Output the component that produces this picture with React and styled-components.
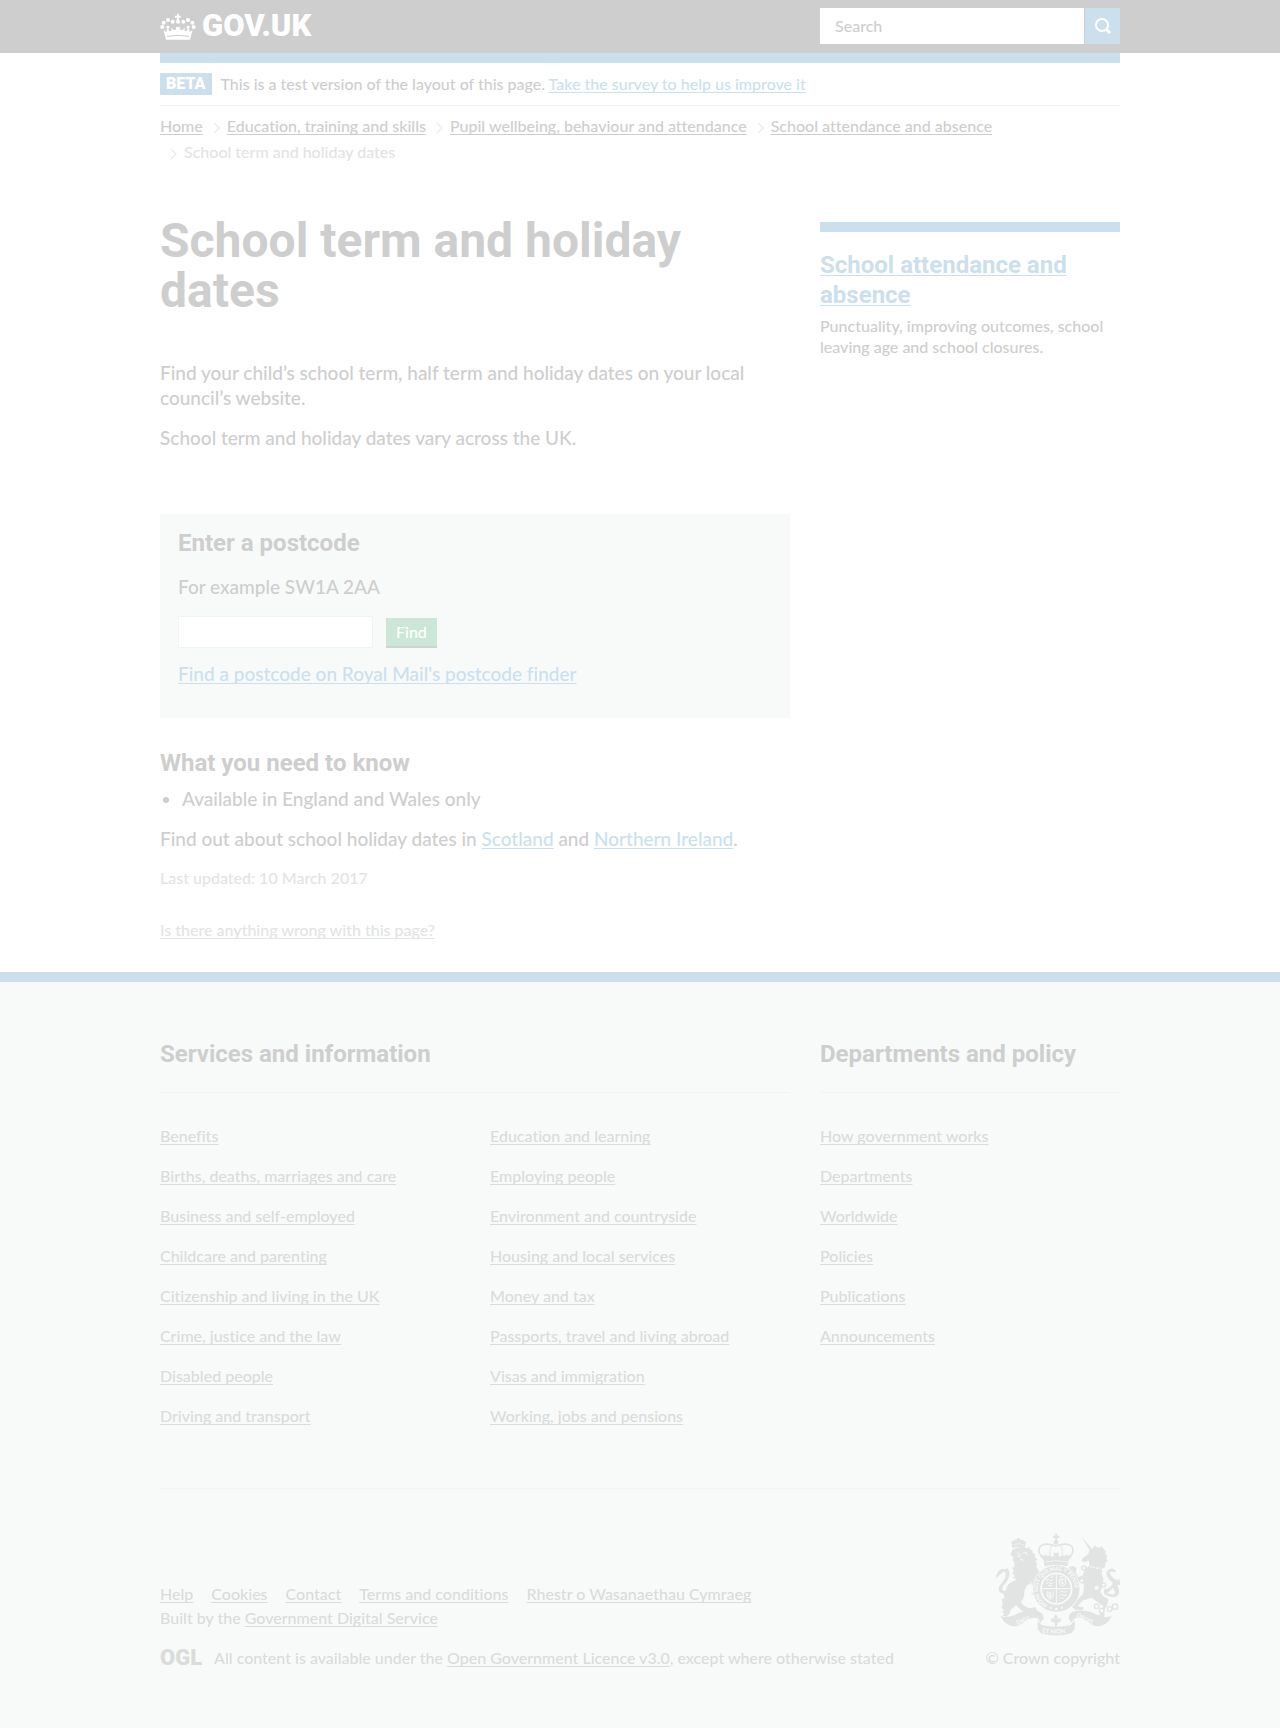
import React from "react";
import styled, { createGlobalStyle } from "styled-components";

const c = {
  ink: "#cecece",
  muted: "#dadbdb",
  faint: "#e2e4e5",
  blue: "#ccdfed",
  green: "#cce7d8",
  panel: "#f8faf9",
  rule: "#f2f3f3",
};

const display = `Roboto, "Liberation Sans", sans-serif`;

const Global = createGlobalStyle`
  *, *::before, *::after { box-sizing: border-box; }
  body {
    margin: 0;
    background: #fff;
    color: ${c.ink};
    font: 500 16px/20px Lato, "Liberation Sans", sans-serif;
    font-variant-ligatures: none;
  }
  h1, h2, p, ul, ol { margin: 0; padding: 0; }
  ul, ol { list-style: none; }
  input, button { font: inherit; border: 0; border-radius: 0; padding: 0; margin: 0; }
`;

const Container = styled.div`
  max-width: 960px;
  margin: 0 auto;
`;

const Link = styled.a`
  color: ${(p) => p.$color || c.blue};
  text-decoration: underline;
  text-decoration-skip-ink: none;
  text-decoration-thickness: 1px;
  text-underline-offset: 2px;
`;

const Columns = styled(Container)`
  display: grid;
  grid-template-columns: minmax(0, 21fr) minmax(0, 10fr);
  column-gap: 30px;
`;

const Header = styled.header`
  background: ${c.ink};
`;

const HeaderRow = styled(Columns)`
  padding: 8px 0 9px;
`;

const Brand = styled.a`
  display: flex;
  align-items: center;
  gap: 6px;
  color: #fff;
  text-decoration: none;
  font-family: ${display};
  font-size: 31px;
  line-height: 36px;
  font-weight: 900;
`;

const Search = styled.form`
  display: flex;
  gap: 1px;
  height: 36px;
`;

const SearchInput = styled.input`
  flex: 1;
  min-width: 0;
  padding: 0 15px;
  background: #fff;
  color: ${c.ink};
  outline: 0;
  &::placeholder { color: ${c.ink}; opacity: 1; }
`;

const SearchButton = styled.button`
  display: grid;
  place-items: center;
  width: 35px;
  background: ${c.blue};
  cursor: pointer;
`;

const PhaseBanner = styled.div`
  display: flex;
  align-items: center;
  gap: 9px;
  border-top: 10px solid ${c.blue};
  border-bottom: 1px solid ${c.rule};
  padding: 10px 0;
`;

const Badge = styled.strong`
  padding: 0 6px;
  background: ${c.blue};
  color: #fff;
  font-family: ${display};
  font-weight: 900;
  line-height: 22px;
`;

const Crumbs = styled.ol`
  display: flex;
  flex-wrap: wrap;
  padding-top: 7px;
  line-height: 26px;
`;

const Crumb = styled.li`
  display: flex;
  align-items: center;
  color: ${c.faint};
  svg { margin: 3px 7px 0 10px; }
`;

const Main = styled(Columns)`
  padding: 51px 0 32px;
`;

const Title = styled.h1`
  font-family: ${display};
  font-size: 48px;
  line-height: 50px;
  font-weight: 700;
  margin-bottom: 44px;
`;

const Text = styled.p`
  font-size: 19px;
  line-height: 25px;
  margin-bottom: 15px;
`;

const Heading = styled.h2`
  font-family: ${display};
  font-size: 24px;
  line-height: 30px;
  font-weight: 700;
`;

const Panel = styled.form`
  margin: 64px 0 30px;
  padding: 14px 18px 17px;
  background: ${c.panel};
`;

const Hint = styled.label`
  display: block;
  font-size: 19px;
  line-height: 25px;
  margin: 16px 0 17px;
`;

const Field = styled.div`
  display: flex;
  align-items: flex-end;
  gap: 13px;
  margin-bottom: 13px;
`;

const Postcode = styled.input`
  width: 195px;
  height: 32px;
  padding: 0 6px;
  background: #fff;
  border: 1px solid ${c.rule};
  color: ${c.ink};
`;

const Find = styled.button`
  height: 30px;
  padding: 0 10px;
  background: ${c.green};
  border-bottom: 2px solid #ccd6d1;
  color: #fff;
  cursor: pointer;
`;

const Bullets = styled.ul`
  list-style: disc outside;
  padding-left: 22px;
  margin: 8px 0 15px;
  font-size: 19px;
  line-height: 25px;
`;

const Updated = styled.p`
  color: ${c.faint};
  margin: 17px 0 32px;
`;

const Aside = styled.aside`
  align-self: start;
  margin-top: 6px;
  border-top: 10px solid ${c.blue};
  padding-top: 18px;
  p { line-height: 21px; margin-top: 5px; }
`;

const Footer = styled.footer`
  background: ${c.panel};
  border-top: 10px solid ${c.blue};
  padding: 57px 0 60px;
  color: ${c.muted};
`;

const FooterHeading = styled(Heading)`
  color: ${c.ink};
  padding: 0 0 23px;
  border-bottom: 1px solid ${c.rule};
  margin-bottom: 33px;
`;

const LinkGrid = styled.ul`
  display: grid;
  grid-auto-flow: column;
  grid-template-rows: repeat(${(p) => p.$rows}, 20px);
  grid-auto-columns: minmax(0, 1fr);
  gap: 20px 30px;
`;

const Meta = styled(Container)`
  display: flex;
  justify-content: space-between;
  align-items: flex-end;
  margin-top: 62px;
  padding-top: 44px;
  border-top: 1px solid ${c.rule};
`;

const MetaLinks = styled.ul`
  display: flex;
  flex-wrap: wrap;
  gap: 0 18px;
`;

const BuiltBy = styled.p`
  margin: 4px 0 20px;
`;

const Licence = styled.div`
  display: flex;
  align-items: center;
  gap: 12px;
`;

const Ogl = styled.strong`
  font-family: ${display};
  font-size: 22px;
  line-height: 20px;
  font-weight: 900;
`;

const Copyright = styled.a`
  display: flex;
  flex-direction: column;
  align-items: flex-end;
  gap: 12px;
  color: ${c.muted};
  text-decoration: none;
`;

const Crown = () => (
  <svg width="36" height="27" viewBox="30 35 108 81" fill="#fff" aria-hidden="true">
    <path d="M81 37h6l-1 6h6v6h-6l2 8h-8l2-8h-7v-6h7z" />
    <circle cx="84" cy="61" r="6" />
    <circle cx="68" cy="61" r="6" /><circle cx="100" cy="61" r="6" />
    <circle cx="54" cy="56" r="6" /><circle cx="114" cy="56" r="6" />
    <circle cx="41" cy="64" r="6" /><circle cx="127" cy="64" r="6" />
    <circle cx="37" cy="77" r="6" /><circle cx="131" cy="77" r="6" />
    <path d="M40 85q5 3 8 8l4-11-4-5 6-5 5 6-4 5q1 8 7 7l3-3-2-7q5 1 6 5l5 1 5-2-2-7h14l-2 7 5 2 5-1q1-4 6-5l-2 7 3 3q6 1 7-7l-4-5 5-6 6 5-4 5 4 11q3-5 8-8l-8 30H48z" />
    <path d="M51 105q33-6 66 0" fill="none" stroke={c.ink} strokeWidth="3" />
  </svg>
);

const SearchIcon = () => (
  <svg width="18" height="18" viewBox="0 0 18 18" fill="none" stroke="#fff" aria-hidden="true">
    <circle cx="8" cy="8" r="6" strokeWidth="2" />
    <path d="M12 12l4 4" strokeWidth="3" />
  </svg>
);

const Chevron = () => (
  <svg width="7" height="12" viewBox="0 0 7 12" fill="none" stroke="#ececed" strokeWidth="1.4" aria-hidden="true">
    <path d="M1 1l5 5-5 5" />
  </svg>
);

const Crest = () => (
  <svg width="125" height="103" viewBox="45 40 375 309" fill="#e1e4e3" aria-hidden="true">
    {/* royal crown */}
    <path d="M225 42h7l-1 6h7v7h-7l1 7h-7l1-7h-7v-7h7z" />
    <circle cx="228" cy="68" r="7" />
    <g fill="none" stroke="#e1e4e3" strokeWidth="5">
      <path d="M194 120q-24-20-15-37 12-17 48-4 38-13 50 4 9 17-15 37" />
      <path d="M213 112q-9-20 5-36M244 112q9-20-5-36" strokeWidth="4" strokeDasharray="4 2" />
    </g>
    <path d="M190 118l-3-14 8 5 2-7 6 8 7-3 5 5 7-4-2-9h17l-2 9 7 4 5-5 7 3 6-8 2 7 8-5-3 14-5 22q-35-8-68 0z" />
    <path d="M194 127q35-8 70 0" fill="none" stroke={c.panel} strokeWidth="2" />
    {/* lion */}
    <path d="M97 85l-3-18 8-5 9-3 1-4h6l1 4 11 3 8 5-4 20q-18-7-37-2z" />
    <path d="M101 76q15-7 31 0" fill="none" stroke={c.panel} strokeWidth="3" strokeDasharray="4 3" />
    <path d="M97 90q20-11 45-4l6-6 1 9 10 4-3 5 12 9-5 3 10 11-7 1 6 13-4 5 9 15 8 8-9 23-6 15-3 29-14-7 9-7-10-24-11 5-8 17q2 25-15 34l-26 22-4 13-9 8-11-3 5-7-8-3 7-6-7-7 3-14-3-13 9-3-4-16 8-8q0-13 13-22l19-10-13-5 8-5-10-10 8-3-8-14 7 2 2-14-7-10 4-5-9-10z" />
    <path d="M111 99l7 3 3 6-9 3M129 100l9-2 3 8M120 117l9 4-3 5M150 187q11 16 15 31" fill="none" stroke={c.panel} strokeWidth="3" />
    <path d="M115 225q8 36 35 41l16-4 6 12-14 12-9-7-22-5q-26-19-30-45z" />
    <path d="M72 222q-24-4-13-24 23-26 17-40-5-7-15 6l-14 14q2-25 19-31l11 2 5-4q16 17-4 44-19 19-6 25l10-1z" />
    {/* unicorn */}
    <path d="M303 48l35 42-7 5z" />
    <path d="M327 94l13-9 3-9 7 7 12 1 1-6 8 9 6 7-1 8 6 6-3 9 4 7-7 6-1 13-11 5 3 9-15 8-36-12 12-17-1-13-15 5-7-6 4-8 16-11z" />
    <path d="M323 136q20 12 39 9" fill="none" stroke={c.panel} strokeWidth="4" strokeDasharray="6 3" />
    <path d="M318 141l46 20 6 15-1 18-8 23 8 13 16 8-4 20-9 14 2 16-13 8-5-7 8-13 6-16-14-11-21-15-25 8-18 17 20 4-4 9-22-2-11-9 13-16 22-23 2-27-16-12-17 3-3-19-12-13 5-13 12-2 9 7-3 12 9 15 12-6z" />
    <path d="M372 209q24-4 26-20-20-16-19-30 8-15 21-12l9 8-5 2q-15-5-15 4 10 18 24 21l5-6 3 19-9 1q13 29-5 35-18 5-35-8l5-6q19 10 25 6 7-6-4-19-8 15-26 17z" />
    <g fill={c.panel} stroke="#e1e4e3" strokeWidth="4">
      <circle cx="350" cy="204" r="8" /><circle cx="371" cy="196" r="6" />
      <circle cx="350" cy="260" r="7" /><circle cx="365" cy="273" r="7" />
      <circle cx="389" cy="268" r="7" /><circle cx="405" cy="261" r="8" />
      <circle cx="311" cy="145" r="6" /><circle cx="305" cy="183" r="6" />
    </g>
    {/* garter */}
    <circle cx="229" cy="207" r="72" fill={c.panel} />
    <circle cx="229" cy="207" r="59" fill="none" stroke="#e1e4e3" strokeWidth="21" />
    <path id="garter" d="M203 257a56 56 0 1 1 52 0" fill="none" />
    <text fill={c.panel} fontSize="17" fontWeight="700" dy="1">
      <textPath href="#garter" startOffset="2">HONI SOIT QUI MAL Y PENSE</textPath>
    </text>
    <circle cx="229" cy="207" r="43" />
    <path d="M229 165v84M187 207h84" stroke={c.panel} strokeWidth="3" />
    <g fill="none" stroke={c.panel} strokeWidth="3">
      <path d="M198 183l7-4 6 4 8-3M199 191l7-3 6 4 8-3M204 199l7-3 7 3M212 173l8-2" />
      <path d="M239 178v17l8 4 9-5v-16zM246 178v15l6-4M238 171h12" />
      <path d="M202 215q-3 17 8 24 12-7 9-24M207 216v17M212 216v20" />
      <path d="M239 218l7-4 6 4 8-3M239 227l7-3 6 4 8-3M238 237l7-3 6 3" />
    </g>
    <g fill={c.panel}><circle cx="212" cy="264" r="3" /><circle cx="229" cy="268" r="4" /><circle cx="246" cy="264" r="3" /></g>
    {/* ribbon and motto */}
    <path d="M62 289q17 8 42-3 31-17 67-12 20 4 20 23l-10 12q-5-16-18-15-21 2-35 17-16 12-35 8-22-7-31-30z" />
    <path d="M395 289q-17 8-42-3-31-17-67-12-20 4-20 23l10 12q5-16 18-15 21 2 35 17 16 12 35 8 22-7 31-30z" />
    <path d="M173 302l12 14q43 11 87 0l13-14-1 26-10 13q-45 13-91 0l-10-13z" />
    <path d="M227 284l7 9-3 7q9-8 12-1 3 6-6 9l-5 1-1 12h-6l-1-12-5-1q-9-3-6-9 3-7 12 1l-4-7z" />
    <path id="dieu" d="M112 316q26-9 55-28" fill="none" />
    <path id="etmon" d="M186 338q45 8 88-1" fill="none" />
    <path id="droit" d="M288 289q28 20 66 31" fill="none" />
    <g fill={c.panel} fontSize="18" fontWeight="700">
      <text><textPath href="#dieu">DIEU</textPath></text>
      <text><textPath href="#etmon">ET MON</textPath></text>
      <text><textPath href="#droit">DROIT</textPath></text>
    </g>
  </svg>
);

const crumbs = [
  "Home",
  "Education, training and skills",
  "Pupil wellbeing, behaviour and attendance",
  "School attendance and absence",
];

const services = [
  "Benefits",
  "Births, deaths, marriages and care",
  "Business and self-employed",
  "Childcare and parenting",
  "Citizenship and living in the UK",
  "Crime, justice and the law",
  "Disabled people",
  "Driving and transport",
  "Education and learning",
  "Employing people",
  "Environment and countryside",
  "Housing and local services",
  "Money and tax",
  "Passports, travel and living abroad",
  "Visas and immigration",
  "Working, jobs and pensions",
];

const departments = [
  "How government works",
  "Departments",
  "Worldwide",
  "Policies",
  "Publications",
  "Announcements",
];

const metaLinks = ["Help", "Cookies", "Contact", "Terms and conditions", "Rhestr o Wasanaethau Cymraeg"];

const FooterLinks = ({ title, items }) => (
  <section>
    <FooterHeading>{title}</FooterHeading>
    <LinkGrid $rows={8}>
      {items.map((item) => (
        <li key={item}><Link href="#" $color={c.muted}>{item}</Link></li>
      ))}
    </LinkGrid>
  </section>
);

export default function App() {
  return (
    <>
      <Global />
      <Header>
        <HeaderRow>
          <Brand href="#"><Crown />GOV.UK</Brand>
          <Search role="search">
            <SearchInput type="search" placeholder="Search" aria-label="Search" />
            <SearchButton type="button" aria-label="Search GOV.UK"><SearchIcon /></SearchButton>
          </Search>
        </HeaderRow>
      </Header>
      <Container>
        <PhaseBanner>
          <Badge>BETA</Badge>
          <p>
            This is a test version of the layout of this page.{" "}
            <Link href="#">Take the survey to help us improve it</Link>
          </p>
        </PhaseBanner>
        <nav aria-label="Breadcrumb">
          <Crumbs>
            {crumbs.map((item, i) => (
              <Crumb key={item}>
                {i > 0 && <Chevron />}
                <Link href="#" $color={c.ink}>{item}</Link>
              </Crumb>
            ))}
            <Crumb aria-current="page"><Chevron />School term and holiday dates</Crumb>
          </Crumbs>
        </nav>
      </Container>
      <Main as="main">
        <div>
          <Title>School term and holiday dates</Title>
          <Text>Find your child’s school term, half term and holiday dates on your local council’s website.</Text>
          <Text>School term and holiday dates vary across the UK.</Text>
          <Panel>
            <Heading>Enter a postcode</Heading>
            <Hint htmlFor="postcode">For example SW1A 2AA</Hint>
            <Field>
              <Postcode id="postcode" type="text" />
              <Find type="button">Find</Find>
            </Field>
            <Text><Link href="#">Find a postcode on Royal Mail's postcode finder</Link></Text>
          </Panel>
          <Heading>What you need to know</Heading>
          <Bullets><li>Available in England and Wales only</li></Bullets>
          <Text>
            Find out about school holiday dates in <Link href="#">Scotland</Link> and{" "}
            <Link href="#">Northern Ireland</Link>.
          </Text>
          <Updated>Last updated: 10 March 2017</Updated>
          <Link href="#" $color={c.faint}>Is there anything wrong with this page?</Link>
        </div>
        <Aside>
          <Heading><Link href="#">School attendance and absence</Link></Heading>
          <p>Punctuality, improving outcomes, school leaving age and school closures.</p>
        </Aside>
      </Main>
      <Footer>
        <Columns>
          <FooterLinks title="Services and information" items={services} />
          <FooterLinks title="Departments and policy" items={departments} />
        </Columns>
        <Meta>
          <div>
            <MetaLinks>
              {metaLinks.map((item) => (
                <li key={item}><Link href="#" $color={c.muted}>{item}</Link></li>
              ))}
            </MetaLinks>
            <BuiltBy>Built by the <Link href="#" $color={c.muted}>Government Digital Service</Link></BuiltBy>
            <Licence>
              <Ogl>OGL</Ogl>
              <p>
                All content is available under the{" "}
                <Link href="#" $color={c.muted}>Open Government Licence v3.0</Link>, except where otherwise stated
              </p>
            </Licence>
          </div>
          <Copyright href="#"><Crest />© Crown copyright</Copyright>
        </Meta>
      </Footer>
    </>
  );
}
